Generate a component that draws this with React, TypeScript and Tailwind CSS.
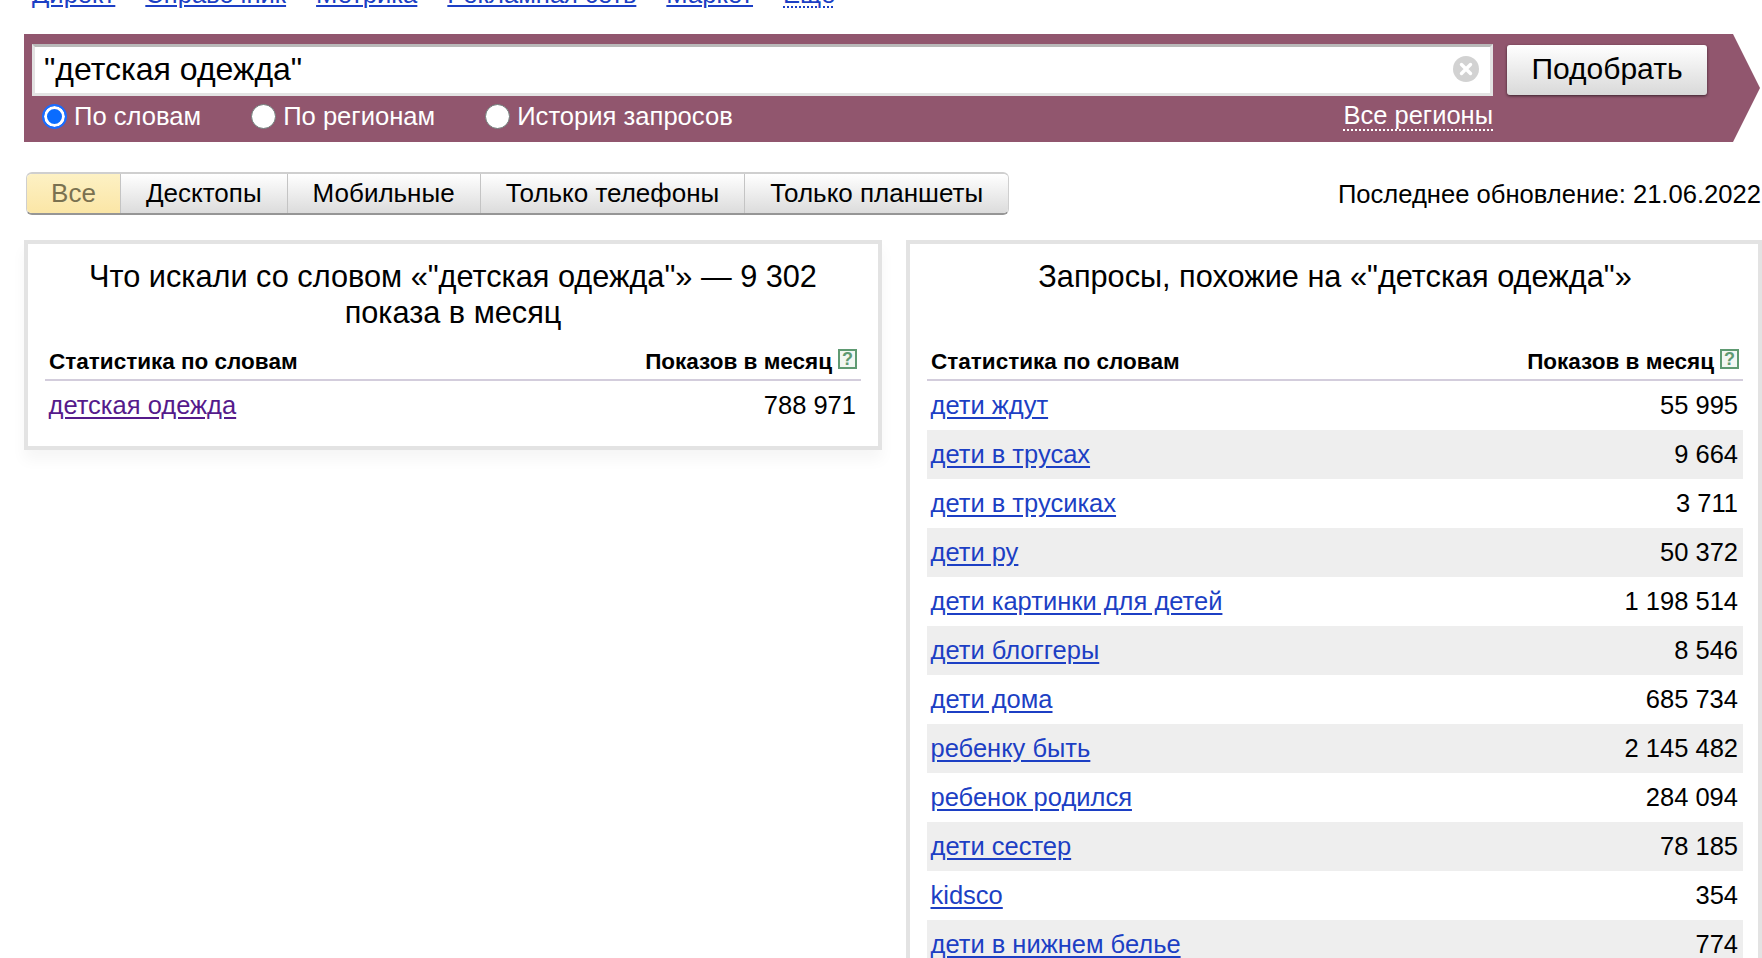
const navLinks = ['Директ', 'Справочник', 'Метрика', 'Рекламная сеть', 'Маркет']

const tabs = ['Десктопы', 'Мобильные', 'Только телефоны', 'Только планшеты']

const modes = [
  { label: 'По словам', checked: true },
  { label: 'По регионам', checked: false },
  { label: 'История запросов', checked: false },
]

const similar = [
  { word: 'дети ждут', count: '55 995' },
  { word: 'дети в трусах', count: '9 664' },
  { word: 'дети в трусиках', count: '3 711' },
  { word: 'дети ру', count: '50 372' },
  { word: 'дети картинки для детей', count: '1 198 514' },
  { word: 'дети блоггеры', count: '8 546' },
  { word: 'дети дома', count: '685 734' },
  { word: 'ребенку быть', count: '2 145 482' },
  { word: 'ребенок родился', count: '284 094' },
  { word: 'дети сестер', count: '78 185' },
  { word: 'kidsco', count: '354' },
  { word: 'дети в нижнем белье', count: '774' },
]

function TableHead() {
  return (
    <div className="flex h-[39px] items-start justify-between border-b-[2px] border-[#d3cddc] pl-[4px] pr-[4px] pt-[7px] text-[22.5px] font-bold leading-[26px]">
      <span>Статистика по словам</span>
      <span className="flex items-start">
        Показов в месяц
        <span className="ml-[6px] flex h-[20px] w-[19px] items-center justify-center border-[2px] border-[#5f9a72] bg-[#f3f7f3] text-[18px] font-bold leading-none text-[#5f9a72]">
          ?
        </span>
      </span>
    </div>
  )
}

export default function App() {
  return (
    <div className="h-[958px] w-[1762px] overflow-hidden bg-white font-['Liberation_Sans',Arial,sans-serif] text-black">
      {/* top links, only the bottom edge is visible */}
      <div className="flex h-[8px] items-end gap-[30px] overflow-hidden pl-[32px] text-[25.6px] leading-[28px] text-[#1c3fc4]">
        {navLinks.map((link) => (
          <a key={link} href="#" className="underline decoration-2 underline-offset-[2px]">
            {link}
          </a>
        ))}
        <a href="#" className="underline decoration-dotted decoration-2 underline-offset-[3px]">
          Ещё
        </a>
      </div>

      {/* search banner */}
      <div className="ml-[24px] mt-[26px] h-[108px] w-[1736px] bg-[#91566e] pl-[8px] pt-[10px] [clip-path:polygon(0_0,1709px_0,100%_50%,1709px_100%,0_100%)]">
        <div className="flex items-start">
          <div className="flex h-[52px] w-[1461px] items-center border-[3px] border-[#e3e3e3] border-t-[#b9b9b9] bg-white pb-[2px] pl-[9px] pr-[11px]">
            <input
              readOnly
              value='"детская одежда"'
              className="min-w-0 flex-1 bg-transparent text-[32px] leading-[38px] outline-none"
            />
            <svg width="26" height="26" viewBox="0 0 26 26">
              <circle cx="13" cy="13" r="13" fill="#d2d2d2" />
              <path d="M8.5 8.5l9 9M17.5 8.5l-9 9" stroke="#fff" strokeWidth="3.4" strokeLinecap="round" />
            </svg>
          </div>
          <button className="ml-[14px] mt-[1px] h-[50px] w-[200px] rounded-[3px] bg-gradient-to-b from-white to-[#d9d9d9] pb-[2px] text-[30px] leading-[34px] shadow-[0_1px_3px_rgba(0,0,0,0.6)]">
            Подобрать
          </button>
        </div>
        <div className="mt-[5px] flex w-[1461px] items-center justify-between pl-[10px] text-white">
          <div className="flex items-center gap-[50px]">
            {modes.map((mode) => (
              <label key={mode.label} className="flex items-center gap-[7px] text-[25.6px] leading-[28px]">
                <input
                  type="radio"
                  name="mode"
                  readOnly
                  defaultChecked={mode.checked}
                  className="h-[25px] w-[25px] appearance-none rounded-full border-[1px] border-[#6f7a78] bg-white checked:border-[2px] checked:border-[#1a6cff] checked:bg-[#0a6cff] checked:shadow-[inset_0_0_0_3px_#fff]"
                />
                {mode.label}
              </label>
            ))}
          </div>
          <a href="#" className="border-b-[2px] border-dotted border-white text-[25.5px] leading-[28px]">
            Все регионы
          </a>
        </div>
      </div>

      {/* device tabs */}
      <div className="mt-[30px] flex items-center justify-between pl-[26px] pr-[1px]">
        <div className="flex h-[43px] overflow-hidden rounded-[6px] border border-t-[2px] border-b-[2px] border-[#cfcfcf] border-b-[#969696] text-[26px] leading-[30px]">
          <div className="flex w-[93px] items-center justify-center bg-gradient-to-b from-[#fdf1c4] to-[#fbe6a6] pb-[1px] text-[#7a7150]">
            Все
          </div>
          {tabs.map((tab) => (
            <div
              key={tab}
              className="flex items-center justify-center border-l border-[#c4c4c4] bg-gradient-to-b from-white to-[#dcdcdc] px-[25px] pb-[1px]"
            >
              {tab}
            </div>
          ))}
        </div>
        <div className="text-[25.6px] leading-[30px]">Последнее обновление: 21.06.2022</div>
      </div>

      {/* result tables */}
      <div className="mt-[25px] flex items-start gap-[24px] pl-[24px]">
        <div className="h-[210px] w-[858px] border-[4px] border-[#e3e3e3] px-[17px] pt-[15px] shadow-[0_10px_14px_rgba(0,0,0,0.04)]">
          <h2 className="mx-auto h-[83px] w-[780px] text-center text-[30.7px] font-normal leading-[36px]">
            Что искали со словом «"детская одежда"» — 9 302 показа в месяц
          </h2>
          <TableHead />
          <div className="flex h-[49px] items-center justify-between pl-[3.5px] pr-[5px] text-[25.5px]">
            <a href="#" className="text-[#551a8b] underline underline-offset-[3px]">
              детская одежда
            </a>
            <span>788 971</span>
          </div>
        </div>

        <div className="h-[800px] w-[856px] border-[4px] border-[#e3e3e3] pl-[17px] pr-[15px] pt-[15px]">
          <h2 className="h-[83px] text-center text-[30.7px] font-normal leading-[36px]">
            Запросы, похожие на «"детская одежда"»
          </h2>
          <TableHead />
          {similar.map((row) => (
            <div
              key={row.word}
              className="flex h-[49px] items-center justify-between pl-[3.5px] pr-[5px] text-[25.5px] even:bg-[#eeeeee]"
            >
              <a href="#" className="text-[#1c3fc4] underline underline-offset-[3px]">
                {row.word}
              </a>
              <span>{row.count}</span>
            </div>
          ))}
        </div>
      </div>
    </div>
  )
}
